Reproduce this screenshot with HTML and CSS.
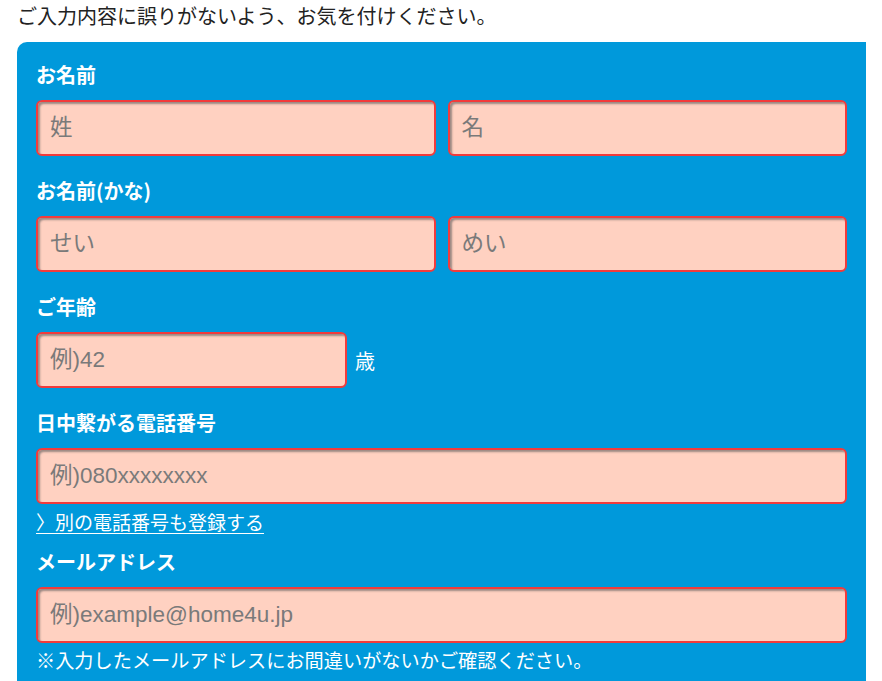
FILE: index.html
```html
<!DOCTYPE html>
<html lang="ja">
<head>
<meta charset="utf-8">
<title>フォーム</title>
<link rel="stylesheet" href="styles.css">
</head>
<body>
<div class="page">
  <p class="intro">ご入力内容に誤りがないよう、お気を付けください。</p>
  <form class="panel">
    <div class="field">
      <div class="label">お名前</div>
      <div class="row two">
        <input class="inp" type="text" placeholder="姓">
        <input class="inp" type="text" placeholder="名">
      </div>
    </div>
    <div class="field">
      <div class="label">お名前(かな)</div>
      <div class="row two">
        <input class="inp" type="text" placeholder="せい">
        <input class="inp" type="text" placeholder="めい">
      </div>
    </div>
    <div class="field">
      <div class="label">ご年齢</div>
      <div class="row age">
        <input class="inp inp-age" type="text" placeholder="例)42">
        <span class="unit">歳</span>
      </div>
    </div>
    <div class="field field-tel">
      <div class="label">日中繋がる電話番号</div>
      <input class="inp" type="text" placeholder="例)080xxxxxxxx">
      <a class="more" href="#">〉別の電話番号も登録する</a>
    </div>
    <div class="field">
      <div class="label">メールアドレス</div>
      <input class="inp" type="text" placeholder="例)example@home4u.jp">
      <p class="note">※入力したメールアドレスにお間違いがないかご確認ください。</p>
    </div>
  </form>
</div>
</body>
</html>
```

FILE: styles.css
```css
html, body {
  margin: 0;
  padding: 0;
  background: #ffffff;
}
body {
  font-family: "Noto Sans CJK JP", "Liberation Sans", sans-serif;
  color: #222222;
}
.page {
  margin: 0 16px 0 17px;
}
.intro {
  margin: 0;
  height: 42px;
  font-size: 20px;
  line-height: 32px;
  color: #222222;
}
.panel {
  display: flex;
  flex-direction: column;
  background: #0099db;
  border-radius: 10px 0 0 0;
  padding: 20px 19px 40px 19px;
  min-height: 700px;
  box-sizing: border-box;
}
.field {
  display: flex;
  flex-direction: column;
  margin-bottom: 22px;
}
.field-tel {
  margin-bottom: 13px;
}
.label {
  font-size: 20px;
  font-weight: 700;
  line-height: 26px;
  color: #ffffff;
  margin-bottom: 12px;
}
.row {
  display: flex;
  align-items: center;
}
.two {
  gap: 12px;
}
.two .inp {
  flex: 1 1 0;
  min-width: 0;
}
.inp {
  display: block;
  box-sizing: border-box;
  width: 100%;
  height: 56px;
  margin: 0;
  padding: 0 12px;
  border: 2px solid #f23b3b;
  border-radius: 6px;
  background: #ffd1c1;
  box-shadow: inset 2px 2px 2px rgba(90, 90, 90, 0.6);
  font-family: "Liberation Sans", "Noto Sans CJK JP", sans-serif;
  font-size: 22.5px;
  color: #333333;
  outline: none;
}
.inp::placeholder {
  color: #7a7a7a;
  opacity: 1;
}
.inp-age {
  width: 311px;
  flex: 0 0 311px;
}
.unit {
  margin-left: 8px;
  font-size: 20px;
  color: #ffffff;
}
.more {
  margin-top: 4px;
  font-size: 19px;
  line-height: 28px;
  color: #ffffff;
  text-decoration: underline;
  text-underline-offset: 3px;
  align-self: flex-start;
}
.note {
  margin: 4px 0 0 0;
  font-size: 19.2px;
  line-height: 26px;
  color: #ffffff;
}
```
